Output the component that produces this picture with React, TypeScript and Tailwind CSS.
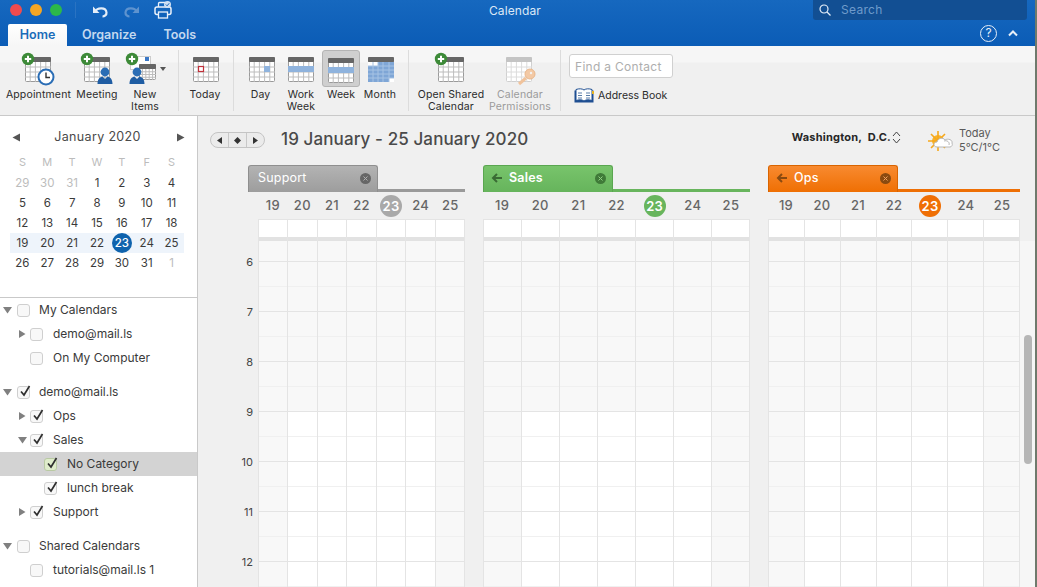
import { ReactNode } from "react";

const FONT = "font-['Inter','Liberation_Sans',sans-serif]";

// ---- ribbon icons ----

function CalGrid({ x = 0, y = 0, w = 26, h = 25, muted = false }: { x?: number; y?: number; w?: number; h?: number; muted?: boolean }) {
  const head = muted ? "#c4c4c4" : "#666";
  const line = muted ? "#dcdcdc" : "#bdbdbd";
  const cols = [1, 2, 3, 4].map((i) => x + (w * i) / 5);
  const rows = [1, 2, 3].map((i) => y + 5 + ((h - 5) * i) / 4);
  return (
    <g>
      <rect x={x + 0.5} y={y + 0.5} width={w - 1} height={h - 1} rx="1" fill="#fff" stroke={muted ? "#d0d0d0" : "#9a9a9a"} />
      <rect x={x} y={y} width={w} height={5} rx="1" fill={head} />
      {cols.map((c) => (
        <line key={c} x1={c} x2={c} y1={y + 5} y2={y + h} stroke={line} />
      ))}
      {rows.map((r) => (
        <line key={r} x1={x} x2={x + w} y1={r} y2={r} stroke={line} />
      ))}
    </g>
  );
}

function Plus({ x, y }: { x: number; y: number }) {
  return (
    <g>
      <circle cx={x} cy={y} r="6.2" fill="#3d8a38" />
      <path d={`M${x - 3.2} ${y}h6.4M${x} ${y - 3.2}v6.4`} stroke="#fff" strokeWidth="2" />
    </g>
  );
}

function Person({ x, y }: { x: number; y: number }) {
  return (
    <g>
      <circle cx={x} cy={y} r="4.4" fill="#2a6db5" />
      <path d={`M${x - 7.5} ${y + 12}c0-5 2.5-7 5-7.5l2.5 2.5 2.5-2.5c2.5.5 5 2.5 5 7.5z`} fill="#1f5da3" />
    </g>
  );
}

function Ico({ children, w = 46 }: { children: ReactNode; w?: number }) {
  return (
    <svg width={w} height="34" viewBox={`0 0 ${w} 34`}>
      {children}
    </svg>
  );
}

function RibbonBtn({ icon, label, muted, w }: { icon: ReactNode; label: string[]; muted?: boolean; w: string }) {
  return (
    <div className={`flex flex-col items-center shrink-0 ${w}`}>
      <div className="h-[37px] flex items-end justify-center">{icon}</div>
      <div className={`mt-[3px] text-center text-[10.5px] leading-[12px] tracking-[0.15px] whitespace-nowrap ${muted ? "text-[#9b9b9b]" : "text-[#2b2b2b]"}`}>
        {label.map((l) => (
          <div key={l}>{l}</div>
        ))}
      </div>
    </div>
  );
}

function Sep() {
  return <div className="w-px h-[61px] bg-[#dcdcdc] shrink-0 mt-px" />;
}

function Ribbon() {
  return (
    <div className="h-[70px] shrink-0 border-b border-[#c9c9c9] bg-[linear-gradient(#f6f6f6_0,#f6f6f6_16px,#f0f0f0_17px)] flex items-start pt-[3px] text-[#2b2b2b]">
      <div className="flex items-start pl-[3px]">
        <RibbonBtn
          w="w-[71px]"
          label={["Appointment"]}
          icon={
            <Ico>
              <CalGrid x={9} y={5} />
              <Plus x={12} y={7} />
              <circle cx="30" cy="25" r="7.5" fill="#fff" stroke="#2a6db5" strokeWidth="2" />
              <path d="M30 20.500V25.500H34" stroke="#333" strokeWidth="1.4" fill="none" />
            </Ico>
          }
        />
        <RibbonBtn
          w="w-[46px]"
          label={["Meeting"]}
          icon={
            <Ico>
              <CalGrid x={10} y={5} />
              <Plus x={13} y={7} />
              <Person x={31} y={20} />
            </Ico>
          }
        />
        <RibbonBtn
          w="w-[50px]"
          label={["New", "Items"]}
          icon={
            <Ico w={50}>
              <rect x="10.500" y="4.500" width="20" height="13" fill="#fff" stroke="#ccc" />
              <rect x="25" y="5" width="4" height="4" fill="#3b78c6" />
              <CalGrid x={19} y={12} w={17} h={16} />
              <Plus x={12} y={7} />
              <Person x={17} y={20} />
              <path d="M40 15h6l-3 4z" fill="#555" />
            </Ico>
          }
        />
        <div className="w-[8px] shrink-0" />
        <Sep />
        <RibbonBtn
          w="w-[52px]"
          label={["Today"]}
          icon={
            <Ico w={28}>
              <CalGrid x={2} y={5} />
              <rect x="7.500" y="14.500" width="5" height="5" fill="#fff" stroke="#c0303a" strokeWidth="1.2" />
            </Ico>
          }
        />
        <div className="w-[2px] shrink-0" />
        <Sep />
        <div className="w-[6px] shrink-0" />
        <RibbonBtn
          w="w-[41px]"
          label={["Day"]}
          icon={
            <Ico w={28}>
              <CalGrid x={2} y={5} />
              <rect x="17" y="14" width="6" height="6" fill="#8fb3dd" />
            </Ico>
          }
        />
        <RibbonBtn
          w="w-[40px]"
          label={["Work", "Week"]}
          icon={
            <Ico w={28}>
              <CalGrid x={1} y={5} />
              <rect x="1" y="14" width="26" height="6" fill="#8fb3dd" />
            </Ico>
          }
        />
        <div className="w-[40px] shrink-0 flex flex-col items-center">
          <div className="mt-px w-[38px] h-[37px] rounded-[3px] bg-[#cfcfcf] border border-[#b4b4b4] flex items-start justify-center pt-[2px]">
            <Ico w={28}>
              <CalGrid x={1} y={5} />
              <rect x="1" y="14" width="26" height="6" fill="#8fb3dd" />
            </Ico>
          </div>
          <div className="mt-[2px] text-[10.5px] leading-[12px]">Week</div>
        </div>
        <RibbonBtn
          w="w-[38px]"
          label={["Month"]}
          icon={
            <Ico w={28}>
              <CalGrid x={2} y={5} />
              <rect x="2" y="10" width="26" height="20" fill="#7fa6d6" />
              <rect x="2" y="10" width="10" height="4" fill="#fff" />
              <rect x="23" y="26" width="5" height="4" fill="#fff" />
              <path d="M7 10v20M12 10v20M17 10v20M23 10v20M2 14h26M2 18h26M2 22h26M2 26h26" stroke="#a7c3e4" />
            </Ico>
          }
        />
        <div className="w-[9px] shrink-0" />
        <Sep />
        <RibbonBtn
          w="w-[84px]"
          label={["Open Shared", "Calendar"]}
          icon={
            <Ico>
              <CalGrid x={10} y={5} />
              <Plus x={13} y={7} />
            </Ico>
          }
        />
        <RibbonBtn
          w="w-[54px]"
          label={["Calendar", "Permissions"]}
          muted
          icon={
            <Ico>
              <CalGrid x={9} y={5} muted />
              <circle cx="33" cy="22" r="5" fill="#f3c9a5" stroke="#eab88c" />
              <circle cx="34" cy="21" r="1.2" fill="#f2f2f2" />
              <path d="M29 26l-7 6" stroke="#f0c39c" strokeWidth="3" />
            </Ico>
          }
        />
        <div className="w-[13px] shrink-0" />
        <Sep />
      </div>
      <div className="ml-[8px] mt-[5px] flex flex-col">
        <div className="w-[104px] h-[24px] bg-white border border-[#d0d0d0] rounded-[3px] px-[5px] pt-[2px] flex items-center text-[12px] tracking-[0.3px] text-[#aeaeae]">
          Find a Contact
        </div>
        <div className="mt-[10px] ml-[5px] flex items-center gap-[4px] text-[10.5px] text-[#2b2b2b]">
          <svg width="20" height="15" viewBox="0 0 20 15">
            <path d="M0.5 2.5H19.5V14.5H0.5z" fill="#1f4f92" />
            <path d="M2 1.5c3-1 6-1 8 .5 2-1.500 5-1.500 8-.5V12.500c-3-1-6-1-8 .5-2-1.500-5-1.500-8-.5z" fill="#fff" stroke="#1f4f92" />
            <path d="M4 5h4M4 7.500h4M4 10h4M12 5h4M12 7.500h4M12 10h4" stroke="#5a7da8" />
            <path d="M18 3h2v3h-2z" fill="#e6b422" />
          </svg>
          Address Book
        </div>
      </div>
    </div>
  );
}

function TopBar() {
  return (
    <div className="h-[46px] shrink-0 relative bg-[linear-gradient(#1668bf,#0b5cb6)] text-white">
      <div className="h-[24px] flex items-center">
        <div className="flex items-center gap-[8px] pl-[10px] w-[75px] -mt-[4px]">
          <span className="w-[12px] h-[12px] rounded-full bg-[#f04b4f] shrink-0" />
          <span className="w-[12px] h-[12px] rounded-full bg-[#f5a623] shrink-0" />
          <span className="w-[12px] h-[12px] rounded-full bg-[#2cb84a] shrink-0" />
        </div>
        <div className="w-px h-[16px] bg-[#2a73c2] -mt-[4px]" />
        <div className="flex items-center ml-[16px] -mt-[2px]">
          <svg width="16" height="14" viewBox="0 0 16 14" fill="none">
            <path d="M3.500 7.500C5 3.500 14 3 14.500 8.500c.2 2.500-2 4-4 4" stroke="#e3edf8" strokeWidth="2.200" />
            <path d="M1 2.500V9h6.500z" fill="#e3edf8" />
          </svg>
          <svg width="16" height="14" viewBox="0 0 16 14" fill="none" className="ml-[16px]">
            <path d="M12.500 7.500C11 3.500 2 3 1.500 8.500c-.2 2.500 2 4 4 4" stroke="#5e93cf" strokeWidth="2.200" />
            <path d="M15 2.500V9H8.500z" fill="#5e93cf" />
          </svg>
          <svg width="18" height="18" viewBox="0 0 18 18" fill="none" className="ml-[14px] -mt-[2px]">
            <path d="M4.500 6V2.500a1 1 0 011-1h6.500M13.500 6V5" stroke="#eaf1fa" strokeWidth="1.300" />
            <rect x="1" y="6" width="16" height="7.500" rx="2" stroke="#eaf1fa" strokeWidth="1.500" />
            <rect x="4.500" y="11" width="9" height="6" fill="#0f62ba" stroke="#eaf1fa" strokeWidth="1.300" />
            <circle cx="13.500" cy="3.500" r="3.500" fill="#cfe0f3" />
            <path d="M11.800 3.500l1.300 1.300 2.100-2.500" stroke="#0f62ba" strokeWidth="1" />
          </svg>
        </div>
        <div className="absolute left-[489px] top-[3px] text-[12px] leading-[15px] tracking-[0.1px] text-[#dce8f6]">Calendar</div>
        <div className="absolute left-[813px] top-0 w-[214px] h-[20px] rounded-b-[3px] bg-[#124f93] flex items-center pl-[6px]">
          <svg width="12" height="12" viewBox="0 0 12 12" fill="none" stroke="#e6eef8" strokeWidth="1.200">
            <circle cx="5" cy="5" r="4" />
            <path d="M8 8l3.500 3.500" />
          </svg>
          <span className="ml-[10px] text-[12px] tracking-[0.3px] text-[#6f9bcb]">Search</span>
        </div>
      </div>
      <div className="h-[22px] flex items-end pl-[8px] text-[12.500px] font-semibold">
        <div className="w-[59px] h-[22px] bg-[linear-gradient(#fff,#f6f6f6)] rounded-t-[2px] flex items-center justify-center text-[#1a6cb9]">Home</div>
        <div className="ml-[15px] h-[22px] flex items-center text-[#c3d8ef]">Organize</div>
        <div className="ml-[27px] h-[22px] flex items-center text-[#c3d8ef]">Tools</div>
        <div className="ml-auto mr-[17px] h-[22px] pb-[4px] flex items-center gap-[11px]">
          <div className="w-[17px] h-[17px] rounded-full border border-[#e7eff8] flex items-center justify-center text-[12px] font-normal text-[#e7eff8]">?</div>
          <svg width="10" height="7" viewBox="0 0 10 7" fill="none">
            <path d="M1 5.500l4-4 4 4" stroke="#e7eff8" strokeWidth="2" />
          </svg>
        </div>
      </div>
    </div>
  );
}

// ---- left sidebar ----

const MONTH = [
  ["29", "30", "31", "1", "2", "3", "4"],
  ["5", "6", "7", "8", "9", "10", "11"],
  ["12", "13", "14", "15", "16", "17", "18"],
  ["19", "20", "21", "22", "23", "24", "25"],
  ["26", "27", "28", "29", "30", "31", "1"],
];

function isMuted(r: number, c: number) {
  return (r === 0 && c < 3) || (r === 4 && c === 6);
}

function MiniMonth() {
  return (
    <div className="h-[182px] shrink-0 border-b border-[#c9c9c9] pt-[13px] bg-white">
      <div className="flex items-center justify-between h-[16px] px-[12px]">
        <svg width="9" height="9" viewBox="0 0 9 9"><path d="M8 .5v8L.5 4.500z" fill="#555" /></svg>
        <span className="text-[12.500px] tracking-[0.35px] text-[#4a4a4a] -ml-[2px]">January 2020</span>
        <svg width="9" height="9" viewBox="0 0 9 9"><path d="M1 .5v8l7.500-4z" fill="#555" /></svg>
      </div>
      <div className="mt-[7px] ml-[10px] mr-[13px] grid grid-cols-7 text-[11px] leading-[20px] text-center text-[#bcbcbc]">
        {["S", "M", "T", "W", "T", "F", "S"].map((d, i) => (
          <div key={i}>{d}</div>
        ))}
      </div>
      <div className="mt-px ml-[10px] mr-[13px]">
        {MONTH.map((row, r) => (
          <div key={r} className={`grid grid-cols-7 h-[20px] text-[11.500px] leading-[20px] text-center ${r === 3 ? "bg-[#eef4fb]" : ""}`}>
            {row.map((d, c) =>
              r === 3 && c === 4 ? (
                <div key={c} className="flex items-center justify-center">
                  <span className="w-[20px] h-[20px] rounded-full bg-[#0f63ad] text-white font-medium">{d}</span>
                </div>
              ) : (
                <div key={c} className={isMuted(r, c) ? "text-[#bcbcbc]" : "text-[#3a3a3a]"}>
                  {d}
                </div>
              )
            )}
          </div>
        ))}
      </div>
    </div>
  );
}

function Check({ on, tint }: { on?: boolean; tint?: boolean }) {
  return (
    <div className={`relative w-[13px] h-[13px] rounded-[3px] border shrink-0 ${tint ? "bg-[#dfeccb] border-[#b9c9a3]" : "bg-[#f8f8f8] border-[#cfcfcf]"}`}>
      {on && (
        <svg width="12" height="12" viewBox="0 0 12 12" fill="none" className="absolute left-[1px] -top-[2px]">
          <path d="M2 6.500l3 3.500 5.500-9" stroke="#2f2f2f" strokeWidth="1.700" />
        </svg>
      )}
    </div>
  );
}

type TreeRow = { label: string; x: number; on?: boolean; arrow?: "down" | "right"; gap?: boolean; selected?: boolean };

function Arrow({ dir }: { dir: "down" | "right" }) {
  return dir === "down" ? (
    <svg width="9" height="8" viewBox="0 0 9 8"><path d="M0 1h9L4.500 7.500z" fill="#808080" /></svg>
  ) : (
    <svg width="8" height="8" viewBox="0 0 8 8"><path d="M1 0v8l6.500-4z" fill="#808080" /></svg>
  );
}

const TREE: TreeRow[] = [
  { label: "My Calendars", x: 0, arrow: "down" },
  { label: "demo@mail.ls", x: 1, arrow: "right" },
  { label: "On My Computer", x: 1 },
  { label: "demo@mail.ls", x: 0, on: true, arrow: "down", gap: true },
  { label: "Ops", x: 1, on: true, arrow: "right" },
  { label: "Sales", x: 1, on: true, arrow: "down" },
  { label: "No Category", x: 2, on: true, selected: true },
  { label: "lunch break", x: 2, on: true },
  { label: "Support", x: 1, on: true, arrow: "right" },
  { label: "Shared Calendars", x: 0, arrow: "down", gap: true },
  { label: "tutorials@mail.ls 1", x: 1 },
];

const INDENT = ["pl-[3px]", "pl-[18px]", "pl-[32px]"];

function CalendarTree() {
  return (
    <div className="flex-1 bg-white text-[12px] text-[#3a3a3a] overflow-hidden">
      {TREE.map((row, i) => (
        <div
          key={i}
          className={`h-[24px] flex items-center ${INDENT[row.x]} ${row.selected ? "bg-[#d3d3d3]" : ""} ${row.gap ? "mt-[10px]" : ""}`}
        >
          <div className={`${row.x === 0 ? "w-[14px]" : "w-[12px]"} shrink-0 flex justify-start`}>{row.arrow && <Arrow dir={row.arrow} />}</div>
          <Check on={row.on} tint={row.selected} />
          <span className={row.x === 0 ? "ml-[9px]" : "ml-[10px]"}>{row.label}</span>
        </div>
      ))}
    </div>
  );
}

// ---- week grid ----

const DAYS = ["19", "20", "21", "22", "23", "24", "25"];
const HOURS = ["6", "7", "8", "9", "10", "11", "12"];

function DayColumn({ weekend, last }: { weekend: boolean; last: boolean }) {
  const slots = Array.from({ length: 16 }, (_, i) => i);
  return (
    <div className={`flex-1 min-w-0 flex flex-col ${last ? "" : "border-r border-[#e4e4e4]"}`}>
      <div className="h-[17px] shrink-0 bg-white" />
      <div className="h-[4px] shrink-0 bg-[#e2e2e2]" />
      <div className="h-[21px] shrink-0 bg-[#f8f8f8] border-b border-[#e4e4e4]" />
      {slots.map((i) => {
        const working = !weekend && i >= 6;
        return (
          <div
            key={i}
            className={`h-[25px] shrink-0 ${working ? "bg-white" : "bg-[#f8f8f8]"} border-b ${i % 2 === 0 ? "border-[#f0f0f0]" : "border-[#e4e4e4]"}`}
          />
        );
      })}
    </div>
  );
}

function Panel({ name, tone, w, back }: { name: string; tone: "gray" | "green" | "orange"; w: string; back?: boolean }) {
  const t = {
    gray: { tab: "bg-[linear-gradient(#b3b3b3,#9d9d9d)] border-[#8f8f8f]", line: "bg-[#9a9a9a]", mark: "bg-[#a9a9a9]", x: "bg-[#666]", cross: "#b0b0b0", arrow: "#555", weight: "" },
    green: { tab: "bg-[linear-gradient(#78c46b,#66b45c)] border-[#5aa650]", line: "bg-[#68b55d]", mark: "bg-[#68b55d]", x: "bg-[#3f7a38]", cross: "#8fd082", arrow: "#3a6b34", weight: "font-semibold" },
    orange: { tab: "bg-[linear-gradient(#f88a30,#ef6f03)] border-[#d96400]", line: "bg-[#ee6f05]", mark: "bg-[#ef6f05]", x: "bg-[#8a4a10]", cross: "#f0a060", arrow: "#8a4a10", weight: "font-medium" },
  }[tone];
  return (
    <div className={`${w} shrink-0 flex flex-col`}>
      <div className={`h-[27px] flex items-end ${back ? "" : "-ml-[10px]"}`}>
        <div className={`w-[130px] shrink-0 h-[27px] rounded-t-[3px] border border-b-0 ${t.tab} flex items-center pl-[9px] pr-[6px] pb-[2px] text-[12.500px] text-white`}>
          {back && (
            <svg width="12" height="10" viewBox="0 0 12 10" fill="none" className="mr-[6px] -ml-[2px]">
              <path d="M11 5H3M6 1L2 5l4 4" stroke={t.arrow} strokeWidth="2" />
            </svg>
          )}
          <span className={`tracking-[0.2px] ${t.weight}`}>{name}</span>
          <span className={`ml-auto w-[11px] h-[11px] rounded-full ${t.x} flex items-center justify-center`}>
            <svg width="5" height="5" viewBox="0 0 5 5"><path d="M.5.5l4 4M4.500.5l-4 4" stroke={t.cross} /></svg>
          </span>
        </div>
        <div className={`flex-1 h-[3px] ${t.line}`} />
      </div>
      <div className="flex h-[27px] pt-px items-center text-[13px] tracking-[0.3px] text-[#666] font-medium">
        {DAYS.map((d) => (
          <div key={d} className="flex-1 flex justify-center">
            {d === "23" ? (
              <span className={`w-[22px] h-[22px] rounded-full ${t.mark} text-white font-semibold text-center leading-[22px]`}>{d}</span>
            ) : (
              d
            )}
          </div>
        ))}
      </div>
      <div className="flex border border-[#e4e4e4] border-b-0 flex-1 overflow-hidden">
        {DAYS.map((d, i) => (
          <DayColumn key={d} weekend={i === 0 || i === 6} last={i === 6} />
        ))}
      </div>
    </div>
  );
}

function WeekView() {
  return (
    <div className="flex-1 min-w-0 bg-[#f0f0f0] flex flex-col overflow-hidden relative">
      <div className="h-[49px] shrink-0 flex items-center pl-[12px] pb-px">
        <div className="w-[55px] h-[16px] rounded-full border border-[#c4c4c4] bg-[#ebebeb] flex items-center justify-around px-[3px]">
          <svg width="6" height="7" viewBox="0 0 6 7"><path d="M5 0v7L0 3.500z" fill="#333" /></svg>
          <span className="w-px h-[14px] bg-[#c8c8c8]" />
          <svg width="7" height="7" viewBox="0 0 7 7"><path d="M3.500 0L7 3.500 3.500 7 0 3.500z" fill="#333" /></svg>
          <span className="w-px h-[14px] bg-[#c8c8c8]" />
          <svg width="6" height="7" viewBox="0 0 6 7"><path d="M1 0v7l5-3.500z" fill="#333" /></svg>
        </div>
        <div className="ml-[16px] text-[17px] tracking-[0.1px] text-[#4a4a4a] font-medium whitespace-nowrap">19 January - 25 January 2020</div>
        <div className="ml-auto -mt-[6px] flex items-center text-[11px] font-bold tracking-[0.2px] text-[#262626] whitespace-nowrap">
          Washington,&nbsp; D.C.
          <svg width="9" height="13" viewBox="0 0 9 13" fill="none" stroke="#444" className="ml-[1px]">
            <path d="M1 5l3.500-4L8 5M1 8l3.500 4L8 8" />
          </svg>
        </div>
        <svg width="26" height="22" viewBox="0 0 26 22" className="ml-[27px] shrink-0">
          <circle cx="10" cy="12" r="6" fill="#f7b32b" />
          <path d="M10 2v20M0 12h20M3 5l14 14M17 5L3 19" stroke="#f7a81b" strokeWidth="1.600" />
          <path d="M9 18c-4 0-4-5 0-5 1-4 6-5 8-2 3-2 8 0 7 3 1 2-.5 4-2 4z" fill="#fff" stroke="#b8b8b8" />
          <path d="M16 12c3-1 6 1 5 4" fill="none" stroke="#b8b8b8" />
        </svg>
        <div className="ml-[5px] w-[43px] text-[11px] leading-[14px] text-[#5a5a5a] shrink-0">
          <div>Today</div>
          <div>5°C/1°C</div>
        </div>
        <div className="w-[33px] shrink-0" />
      </div>
      <div className="relative flex-1 min-h-0 flex pl-[60px] overflow-hidden">
        <div className="absolute left-0 w-[55px] top-[72px] text-right text-[11px] text-[#444]">
          {HOURS.map((h) => (
            <div key={h} className="h-[50px] leading-[50px]">
              {h}
            </div>
          ))}
        </div>
        <div className="flex flex-1 min-w-0">
          <Panel name="Support" tone="gray" w="w-[207px]" />
          <div className="w-[18px] shrink-0" />
          <Panel name="Sales" tone="green" w="w-[267px]" back />
          <div className="w-[18px] shrink-0" />
          <Panel name="Ops" tone="orange" w="w-[252px]" back />
          <div className="relative flex-1 mt-[76px] bg-[#f6f6f6]">
            <div className="absolute left-[4px] top-[94px] w-[8px] h-[129px] rounded-full bg-[#b6b6b6]" />
          </div>
        </div>
      </div>
    </div>
  );
}

export default function App() {
  return (
    <div className={`${FONT} w-[1037px] h-[587px] flex bg-[#6f7a6c] overflow-hidden`}>
      <div className="w-[1035px] h-full flex flex-col bg-[#f0f0f0]">
        <TopBar />
        <Ribbon />
        <div className="flex-1 min-h-0 flex">
          <div className="w-[198px] shrink-0 border-r border-[#c9c9c9] flex flex-col bg-white overflow-hidden">
            <MiniMonth />
            <CalendarTree />
          </div>
          <WeekView />
        </div>
      </div>
    </div>
  );
}
